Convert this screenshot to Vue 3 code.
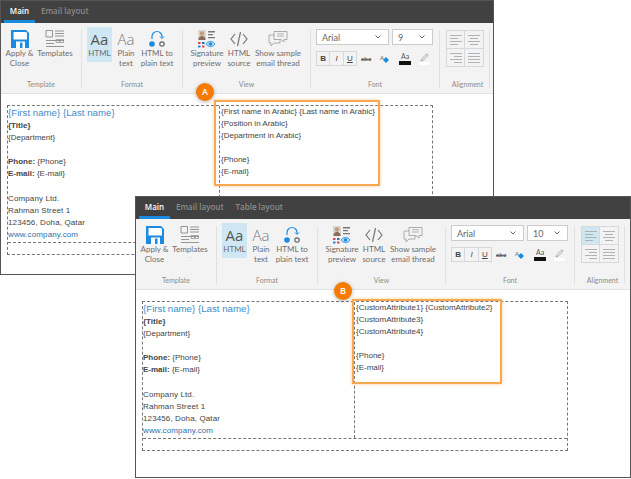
<script setup>
const windows = [
  {
    id: 'a', tabs: ['Main', 'Email layout'], size: '9', alignOn: false, badge: 'A',
    right: ['{First name in Arabic} {Last name in Arabic}', '{Position in Arabic}', '{Department in Arabic}', '', '{Phone}', '{E-mail}'],
  },
  {
    id: 'b', tabs: ['Main', 'Email layout', 'Table layout'], size: '10', alignOn: true, badge: 'B',
    right: ['{CustomAttribute1} {CustomAttribute2}', '{CustomAttribute3}', '{CustomAttribute4}', '', '{Phone}', '{E-mail}'],
  },
]
const aligns = [
  ['M0 .5h12M0 3.500h8M0 6.500h12M0 9.500h8', true],
  ['M0 .5h12M2 3.500h8M0 6.500h12M2 9.500h8', false],
  ['M0 .5h12M4 3.500h8M0 6.500h12M4 9.500h8', false],
  ['M0 .5h12M0 3.500h12M0 6.500h12M0 9.500h12', false],
]
</script>

<template>
  <div class="page">
    <section v-for="w in windows" :key="w.id" class="win" :class="'win-' + w.id">
      <header class="tabs">
        <span v-for="(t, i) in w.tabs" :key="t" class="tab" :class="{ on: i === 0 }">{{ t }}</span>
      </header>

      <div class="ribbon">
        <div class="group g1">
          <div class="btns">
            <div class="btn b1">
              <svg class="ico" width="18" height="18" viewBox="0 0 18 18">
                <path d="M0 0h15l3 3v15H0z" fill="#1b8be0" />
                <path d="M2.500 2h12.500l1 1v6.500H2.500z" fill="#fff" />
                <path d="M5 11.500h9V18H5z" fill="#fff" />
                <path d="M9 12.500h2.500V18H9z" fill="#1b8be0" />
              </svg>
              <span>Apply &amp;<br />Close</span>
            </div>
            <div class="btn b2">
              <svg class="ico" width="20" height="18" viewBox="0 0 20 18" fill="none" stroke="#8a8a8a" stroke-width=".9">
                <path d="M1 .5h6.500v6.500H1zM10 1h9M10 3.500h9M10 6h9" />
                <path d="M1 10.500h18M1 13.500h8M1 16.500h18" />
                <path d="M11 9.500h3.500v3H11zM15 9.500h3.500v3H15z" stroke-width=".7" />
              </svg>
              <span>Templates</span>
              <svg class="chev" width="5" height="3" viewBox="0 0 5 3"><path d="M.5 .5l2 2 2-2" fill="none" stroke="#999" stroke-width=".7" /></svg>
            </div>
          </div>
          <div class="glabel">Template</div>
        </div>

        <div class="group g2">
          <div class="btns">
            <div class="btn b3 active">
              <span class="aa bold">Aa</span>
              <span>HTML</span>
            </div>
            <div class="btn b4">
              <span class="aa thin">Aa</span>
              <span>Plain<br />text</span>
            </div>
            <div class="btn b5">
              <svg class="ico" width="18" height="18" viewBox="0 0 18 18" fill="none">
                <path d="M4 9V6.500a5 5 0 0 1 10 0V8" stroke="#1b8be0" stroke-width="1.200" />
                <path d="M12 6.500l2 2 2-2" stroke="#1b8be0" stroke-width="1" />
                <circle cx="4" cy="14" r="2.800" fill="#1b8be0" />
                <circle cx="14" cy="14" r="2.200" stroke="#666" stroke-width="1.200" />
              </svg>
              <span>HTML to<br />plain text</span>
            </div>
          </div>
          <div class="glabel">Format</div>
        </div>

        <div class="group g3">
          <div class="btns">
            <div class="btn b6">
              <svg class="ico" width="20" height="18" viewBox="0 0 20 18">
                <path d="M1 0h8v10H1z" fill="#d9d5d0" />
                <circle cx="5" cy="3.500" r="2.200" fill="#c99a7c" />
                <path d="M1.500 10c0-3 1.500-4 3.500-4s3.500 1 3.500 4z" fill="#8a6b5c" />
                <path d="M11 1h7v1.500h-7zM11 4h5v1.200h-5zM11 7h7v1.200h-7z" fill="#777" />
                <path d="M1 12h2.500v2H1z" fill="#e04444" />
                <path d="M5 12h2.500v2H5z" fill="#2a6fb8" />
                <path d="M1 15.500h2.500v2H1z" fill="#1b8be0" />
                <path d="M5 15.500h2.500v2H5z" fill="#e04444" />
                <path d="M9 14c2-3.500 7-3.500 9 0-2 3.500-7 3.500-9 0z" fill="#bfe0f5" stroke="#1b8be0" stroke-width=".8" />
                <circle cx="13.500" cy="14" r="1.800" fill="#1b8be0" />
              </svg>
              <span>Signature<br />preview</span>
            </div>
            <div class="btn b7">
              <svg class="ico" width="18" height="18" viewBox="0 0 18 18" fill="none" stroke="#777" stroke-width="1.200">
                <path d="M5 4L1 9l4 5M13 4l4 5-4 5M10.500 2L7.500 16" />
              </svg>
              <span>HTML<br />source</span>
            </div>
            <div class="btn b8">
              <svg class="ico" width="20" height="18" viewBox="0 0 20 18" fill="none" stroke="#999" stroke-width=".8">
                <path d="M6 1.500h13v8h-3v2.500l-3-2.500H6z" />
                <path d="M6 5H1v8h2v3l3-3h6v-3" />
                <path d="M9 3.800h7M9 6h7" stroke-width=".7" />
              </svg>
              <span>Show sample<br />email thread</span>
            </div>
          </div>
          <div class="glabel">View</div>
        </div>

        <div class="group g4">
          <div class="font-col">
            <div class="selects">
              <div class="sel fam"><span>Arial</span><svg width="6" height="4" viewBox="0 0 6 4"><path d="M.5 .5l2.500 2.500 2.500-2.500" fill="none" stroke="#666" /></svg></div>
              <div class="sel siz"><span>{{ w.size }}</span><svg width="6" height="4" viewBox="0 0 6 4"><path d="M.5 .5l2.500 2.500 2.500-2.500" fill="none" stroke="#666" /></svg></div>
            </div>
            <div class="fmt">
              <div class="biu">
                <b>B</b><i>I</i><u>U</u>
              </div>
              <span class="abc">abc</span>
              <svg class="tool t-fill" width="10" height="10" viewBox="0 0 10 10">
                <text x="0" y="6" font-size="6" fill="#666" font-family="Liberation Sans">A</text>
                <path d="M6 3l3 3-3 3-3-3z" fill="#1b8be0" />
              </svg>
              <div class="tool t-color"><span>Aa</span><i></i></div>
              <div class="tool t-pen">
                <svg width="9" height="9" viewBox="0 0 9 9"><path d="M1 8l1-2.500L7 .8l1.200 1.200L3.500 7z" fill="none" stroke="#999" stroke-width=".8" /></svg>
                <i></i>
              </div>
            </div>
          </div>
          <div class="glabel">Font</div>
        </div>

        <div class="group g5">
          <div class="agrid">
            <div v-for="(a, i) in aligns" :key="i" class="acell" :class="{ on: a[1] && w.alignOn }">
              <svg width="12" height="10" viewBox="0 0 12 10"><path :d="a[0]" fill="none" stroke="#aaa" stroke-width=".9" /></svg>
            </div>
          </div>
          <div class="glabel">Alignment</div>
        </div>
      </div>

      <div class="doc">
        <div class="sig">
          <div class="cell left">
            <div class="name">{First name} {Last name}</div>
            <div class="strong">{Title}</div>
            <div>{Department}</div>
            <div class="gap"></div>
            <div><strong>Phone:</strong> {Phone}</div>
            <div><strong>E-mail:</strong> {E-mail}</div>
            <div class="gap"></div>
            <div class="sp">Company Ltd.</div>
            <div class="sp">Rahman Street 1</div>
            <div class="sp">123456, Doha, Qatar</div>
            <div class="link sp">www.company.com</div>
          </div>
          <div class="cell right">
            <div v-for="(l, i) in w.right" :key="i" class="line">{{ l }}</div>
          </div>
          <div class="foot"></div>
        </div>
      </div>

      <div class="hilite"></div>
      <div class="badge">{{ w.badge }}</div>
    </section>
  </div>
</template>

<style scoped>
.page { position: relative; width: 631px; height: 479px; background: #fff; overflow: hidden; font-family: "Lato", "Liberation Sans", sans-serif; }
.win { position: absolute; box-sizing: border-box; border: 1px solid #555; background: #fff; display: flex; flex-direction: column; }
.win-a { left: 0; top: 0; width: 494px; height: 275px; }
.win-b { left: 135px; top: 196px; width: 496px; height: 282px; }
.tabs { height: 22px; background: #414141; display: flex; padding-left: 3px; flex: none; }
.tab { box-sizing: border-box; height: 22px; padding: 3px 6px 0; font-family: "Open Sans", sans-serif; font-size: 8px; line-height: 13px; font-weight: 600; color: #8b8b8b; white-space: nowrap; }
.tab.on { color: #fff; width: 31px; padding: 3px 0 0; text-align: center; border-bottom: 3px solid #1b8be0; }
.ribbon { height: 71px; flex: none; box-sizing: border-box; background: #f3f3f3; border-bottom: 1px solid #dde3e8; display: flex; padding-top: 7px; }
.group { box-sizing: border-box; height: 58px; border-right: 1px solid #dfe2e5; display: flex; flex-direction: column; flex: none; }
.g1 { width: 81px; }
.g2 { width: 101px; }
.g3 { width: 128px; }
.g4 { width: 129px; }
.g5 { width: 50px; }
.btns { display: flex; flex: 1; margin-top: -3px; }
.g1 .btns { padding-left: 1px; }
.g2 .btns { padding-left: 5px; }
.g3 .btns { padding-left: 6px; }
.btn { box-sizing: border-box; display: flex; flex-direction: column; align-items: center; font-size: 8px; line-height: 9.500px; color: #6e6e6e; text-align: center; white-space: nowrap; padding-top: 3px; height: 35px; }
.ico { display: block; margin-bottom: 1px; flex: none; }
.b1 { width: 35px; }
.b2 { width: 36px; }
.b3 { width: 25px; }
.b4 { width: 28px; }
.b5 { width: 34px; }
.b6 { width: 36px; }
.b7 { width: 28px; }
.b8 { width: 50px; }
.active { background: #cfe7f3; }
.chev { display: block; margin-top: 2px; }
.aa { font-size: 15px; line-height: 18px; margin-bottom: 1px; font-family: "Open Sans", sans-serif; }
.aa.bold { color: #555; font-weight: 500; }
.aa.thin { color: #777; font-weight: 300; }
.glabel { height: 8px; line-height: 8px; font-size: 7px; color: #8c8c8c; text-align: center; flex: none; }
.font-col { flex: 1; padding: 0 0 0 5px; }
.selects { display: flex; gap: 3px; margin-top: -1px; }
.sel { box-sizing: border-box; height: 16px; background: #fff; border: 1px solid #ccc; display: flex; align-items: center; justify-content: space-between; padding: 0 7px 0 5px; font-size: 9px; color: #666; }
.fam { width: 73px; }
.siz { width: 41px; }
.fmt { display: flex; align-items: center; margin-top: 6px; height: 15px; }
.biu { display: flex; box-sizing: border-box; width: 41px; height: 15px; border: 1px solid #d3d9dd; }
.biu > * { flex: 1; text-align: center; font-size: 8px; line-height: 13px; color: #444; font-family: "Liberation Sans", sans-serif; border-right: 1px solid #d3d9dd; }
.biu > *:last-child { border-right: 0; }
.abc { margin-left: 4px; width: 11px; font-size: 6px; font-weight: 600; color: #666; text-decoration: line-through; font-family: "Liberation Sans", sans-serif; }
.tool { flex: none; }
.t-fill { margin-left: 8px; }
.t-color { margin-left: 9px; width: 12px; display: flex; flex-direction: column; align-items: center; font-size: 7px; line-height: 8px; color: #555; }
.t-color i { display: block; width: 12px; height: 4px; background: #111; margin-top: 1px; }
.t-pen { margin-left: 8px; width: 11px; display: flex; flex-direction: column; align-items: center; }
.t-pen svg { display: block; }
.t-pen i { display: block; width: 11px; height: 3px; background: #fff; }
.g5 { padding-left: 6px; }
.agrid { display: grid; grid-template-columns: 18px 18px; grid-auto-rows: 18px; align-content: start; width: 38px; box-sizing: border-box; border: 1px solid #d3d9dd; height: 37px; flex: none; margin-bottom: 13px; }
.acell { display: flex; align-items: center; justify-content: center; box-sizing: border-box; }
.acell:nth-child(odd) { border-right: 1px solid #d3d9dd; }
.acell:nth-child(-n+2) { border-bottom: 1px solid #d3d9dd; }
.acell.on { background: #cfe7f3; }
.doc { flex: 1; padding: 11px 0 0 6px; color: #444; font-family: "Liberation Sans", sans-serif; font-size: 8px; line-height: 12.100px; }
.sig { box-sizing: border-box; width: 426px; height: 150px; border: 1px dashed #777; display: grid; grid-template-columns: 212px 1fr; grid-template-rows: 136px 1fr; }
.cell { box-sizing: border-box; white-space: nowrap; }
.left { border-right: 1px dashed #777; }
.right { padding-left: 1px; }
.right div { min-height: 12.100px; }
.name { font-size: 9.700px; line-height: 14px; color: #3d8cc9; }
.strong, strong { font-weight: 700; color: #444; }
.gap { height: 12.100px; }
.sp { letter-spacing: .12px; }
.link { color: #2d6fa8; }
.foot { grid-column: 1 / 3; border-top: 1px dashed #777; }
.hilite { position: absolute; box-sizing: border-box; border: 2px solid #f8a850; box-shadow: 0 0 3px rgba(245, 154, 58, .5); pointer-events: none; }
.win-a .hilite { left: 213px; top: 99px; width: 166px; height: 86px; }
.win-b .hilite { left: 216px; top: 102px; width: 150px; height: 85px; }
.badge { position: absolute; width: 18px; height: 18px; border-radius: 50%; background: #f57c00; color: #fff; font-family: "Open Sans", sans-serif; font-size: 9px; font-weight: 600; line-height: 18px; text-align: center; box-shadow: 0 1px 4px rgba(0, 0, 0, .3); }
.win-a .badge { left: 195px; top: 82px; }
.win-b .badge { left: 198px; top: 85px; }
</style>
